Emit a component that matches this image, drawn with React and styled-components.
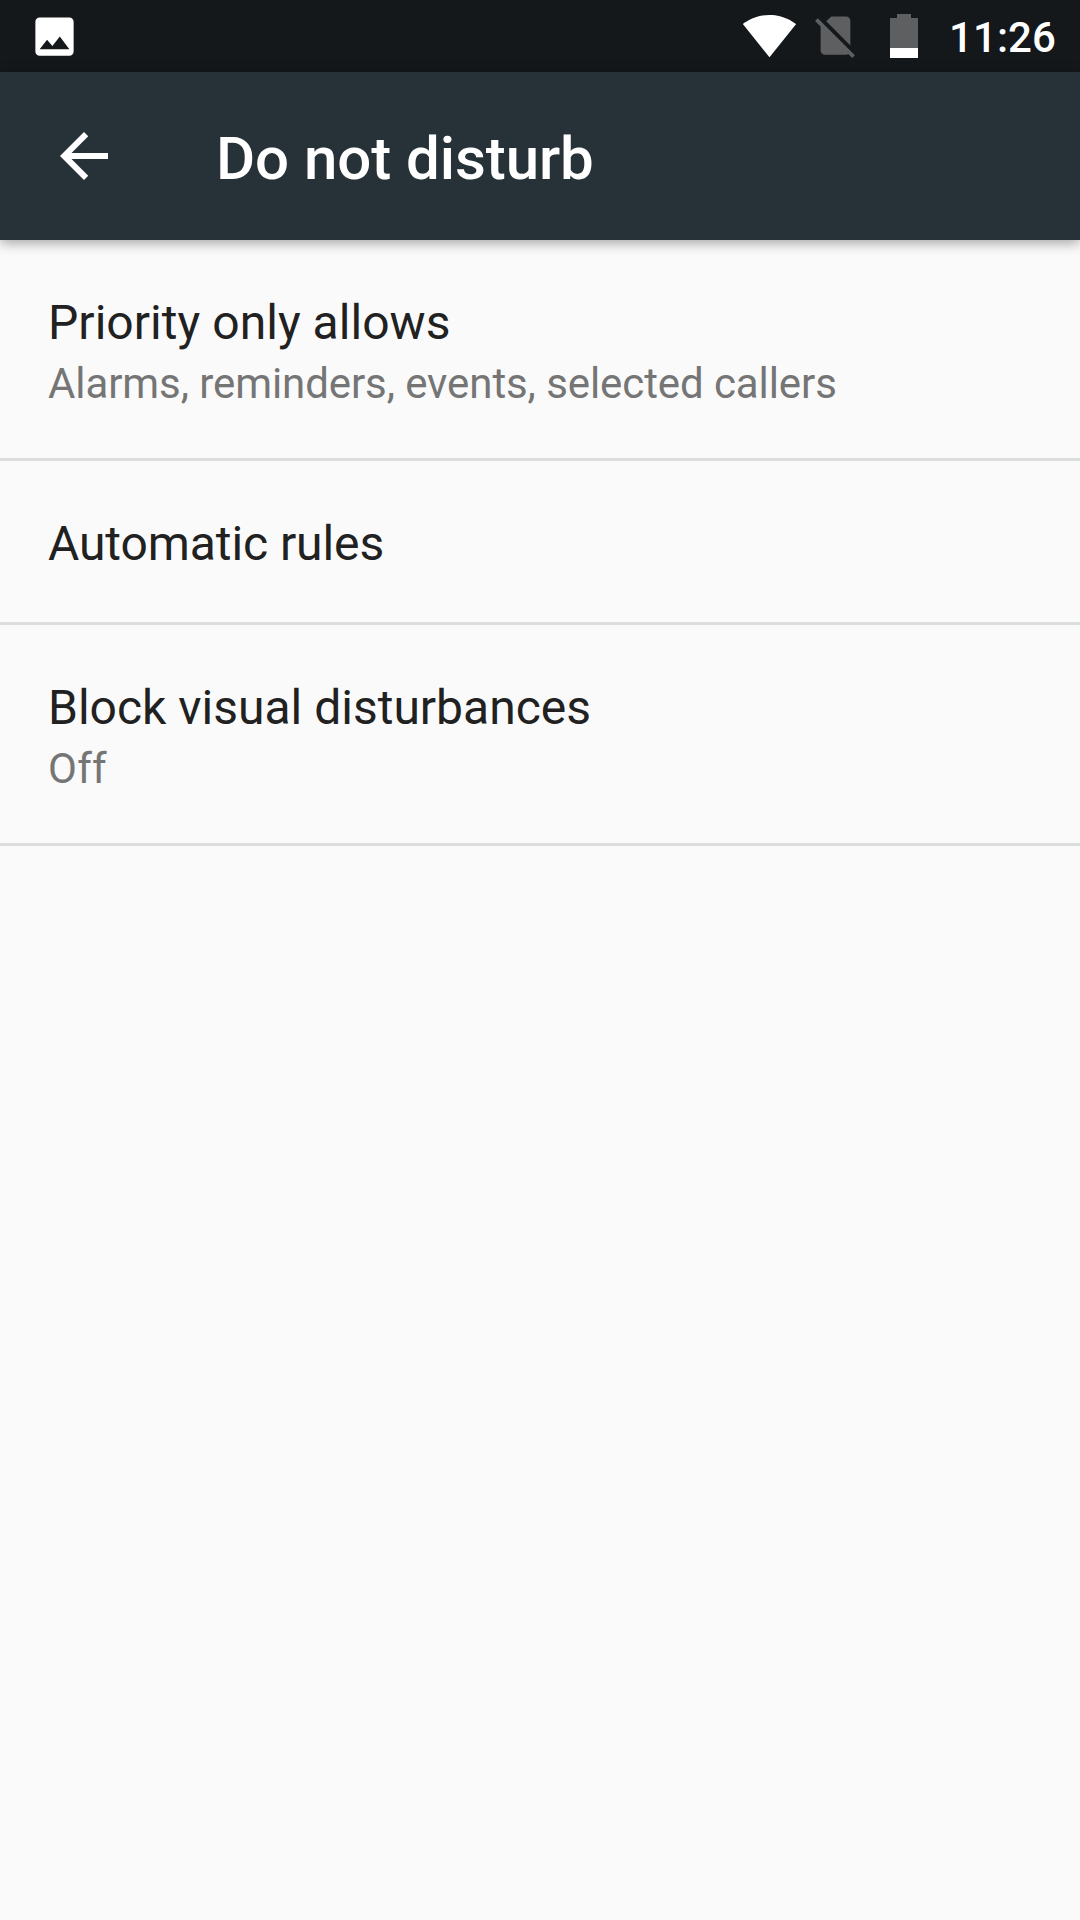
// App.jsx
import React from 'react';
import styled, { createGlobalStyle } from 'styled-components';

const GlobalStyle = createGlobalStyle`
  body {
    margin: 0;
    background: #fafafa;
    font-family: Roboto, sans-serif;
  }
`;

const Screen = styled.div`
  display: flex;
  flex-direction: column;
  width: 1080px;
  height: 1920px;
  overflow: hidden;
  background: #fafafa;
`;

const StatusBar = styled.header`
  display: flex;
  align-items: flex-start;
  justify-content: space-between;
  box-sizing: border-box;
  height: 72px;
  padding: 0 24px 0 29px;
  background: #14181b;
  color: #fff;
`;

const StatusGroup = styled.div`
  display: flex;
  align-items: flex-start;
`;

const StatusIcon = styled.svg`
  display: block;
  width: ${({ $width }) => $width}px;
  height: ${({ $height }) => $height}px;
  margin-top: ${({ $top }) => $top}px;
  margin-right: ${({ $gap = 0 }) => $gap}px;
`;

const Clock = styled.span`
  margin-top: 13px;
  font-size: 42px;
  font-weight: 500;
  letter-spacing: 0.1px;
  line-height: 50px;
`;

const AppBar = styled.div`
  display: flex;
  align-items: center;
  position: relative;
  flex: none;
  height: 168px;
  padding-left: 48px;
  background: #273238;
  color: #fff;
  box-shadow: 0 3px 12px rgba(0, 0, 0, 0.35);
`;

const BackButton = styled.button`
  width: 72px;
  height: 72px;
  margin-right: 96px;
  padding: 0;
  border: none;
  background: none;
  color: inherit;

  svg {
    display: block;
  }
`;

const Title = styled.h1`
  margin: 5px 0 0;
  font-size: 60px;
  font-weight: 500;
  letter-spacing: -0.07px;
  line-height: 70px;
`;

const List = styled.ul`
  margin: 0;
  padding: 0;
  list-style: none;
`;

const Row = styled.li`
  box-sizing: border-box;
  height: ${({ $tall }) => ($tall ? 221 : 164)}px;
  padding: 54px 48px 0;
  border-bottom: 3px solid #dcdddd;
`;

const RowTitle = styled.div`
  color: #212121;
  font-size: 48px;
  letter-spacing: ${({ $tracking = 0 }) => $tracking}px;
  line-height: 57px;
`;

const RowSummary = styled.div`
  margin-top: 8px;
  color: #757575;
  font-size: 42px;
  font-variant-ligatures: none;
  letter-spacing: ${({ $tracking = 0 }) => $tracking}px;
  line-height: 50px;
`;

const preferences = [
    {
        title: 'Priority only allows',
        titleTracking: 0.04,
        summary: 'Alarms, reminders, events, selected callers',
        summaryTracking: -0.085,
    },
    { title: 'Automatic rules', titleTracking: -0.08 },
    { title: 'Block visual disturbances', summary: 'Off', summaryTracking: 0.3 },
];

const PictureIcon = () => (
    <StatusIcon viewBox="0 0 24 24" $width={51} $height={51} $top={10.6}>
        <path
            fill="#fff"
            d="M21 19V5c0-1.1-.9-2-2-2H5c-1.1 0-2 .9-2 2v14c0 1.1.9 2 2 2h14c1.1 0 2-.9 2-2zM8.5 13.5l2.5 3.01L14.5 12l4.5 6H5l3.5-4.5z"
        />
    </StatusIcon>
);

const WifiIcon = () => (
    <StatusIcon viewBox="0 0 24 24" $width={55} $height={55} $top={7.6} $gap={13}>
        <path
            fill="#fff"
            d="M12.01 21.49L23.64 7c-.45-.34-4.93-4-11.64-4C5.28 3 .81 6.66.36 7l11.63 14.49.01.01.01-.01z"
        />
    </StatusIcon>
);

const NoSimIcon = () => (
    <StatusIcon viewBox="0 0 24 24" $width={51} $height={51} $top={10} $gap={29}>
        <path
            fill="#5d5f61"
            d="M18.99 5c0-1.1-.89-2-1.99-2h-7L7.66 5.34 19 16.68 18.99 5zM3.65 3.88L2.38 5.15 5 7.77V19c0 1.1.9 2 2 2h10.01c.35 0 .67-.1.96-.26l1.88 1.88 1.27-1.27L3.65 3.88z"
        />
    </StatusIcon>
);

const BatteryIcon = () => (
    <StatusIcon viewBox="0 0 28 44" $width={28} $height={44} $top={14} $gap={31}>
        <path fill="#5d5f61" d="M7 0h14v4h7v30H0V4h7z" />
        <path fill="#fff" d="M0 34h28v10H0z" />
    </StatusIcon>
);

const App = () => {
    return (
        <>
            <GlobalStyle />
            <Screen>
                <StatusBar>
                    <PictureIcon />
                    <StatusGroup>
                        <WifiIcon />
                        <NoSimIcon />
                        <BatteryIcon />
                        <Clock>11:26</Clock>
                    </StatusGroup>
                </StatusBar>
                <AppBar>
                    <BackButton aria-label="Navigate up">
                        <svg width="72" height="72" viewBox="0 0 24 24" fill="currentColor">
                            <path d="M20 11H7.83l5.59-5.59L12 4l-8 8 8 8 1.41-1.41L7.83 13H20v-2z" />
                        </svg>
                    </BackButton>
                    <Title>Do not disturb</Title>
                </AppBar>
                <List>
                    {preferences.map(({ title, titleTracking, summary, summaryTracking }) => (
                        <Row key={title} $tall={Boolean(summary)}>
                            <RowTitle $tracking={titleTracking}>{title}</RowTitle>
                            {summary && (
                                <RowSummary $tracking={summaryTracking}>{summary}</RowSummary>
                            )}
                        </Row>
                    ))}
                </List>
            </Screen>
        </>
    );
};

export default App;
